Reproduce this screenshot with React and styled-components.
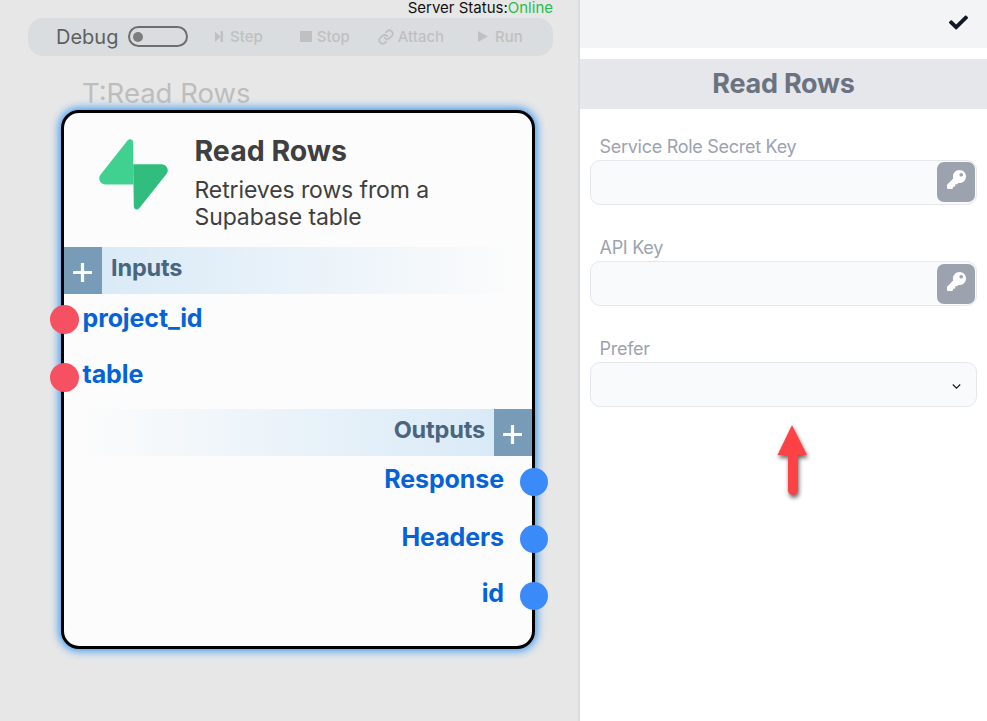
import React from "react";
import styled, { createGlobalStyle } from "styled-components";
import { FaCheck, FaKey } from "react-icons/fa";

const GlobalStyle = createGlobalStyle`
  *, *::before, *::after { box-sizing: border-box; }
  body { margin: 0; font-family: Inter, "Liberation Sans", sans-serif; }
`;

const Page = styled.div`
  display: grid;
  grid-template-columns: 580px 1fr;
  height: 721px;
  overflow: hidden;
  background: #fff;
`;

const Canvas = styled.main`
  background: #e7e7e7;
  border-right: 2px solid #d9dde0;
`;

const ServerStatus = styled.div`
  height: 18px;
  padding-right: 25px;
  text-align: right;
  font-size: 15px;
  line-height: 16px;
  color: #111;
`;

const Online = styled.span`
  color: #1fbf4a;
`;

const Toolbar = styled.div`
  display: flex;
  align-items: center;
  width: 525px;
  height: 38px;
  margin-left: 28px;
  padding: 0 0 1px 28px;
  border-radius: 15px;
  background: #d9dddf;
`;

const DebugLabel = styled.label`
  width: 72px;
  font-size: 20px;
  line-height: 36px;
  color: #5f5f5f;
`;

const Switch = styled.div`
  display: flex;
  align-items: center;
  width: 60px;
  height: 21px;
  padding-left: 3px;
  border: 2px solid #6e6e6e;
  border-radius: 11px;
`;

const Knob = styled.span`
  width: 10px;
  height: 10px;
  border-radius: 50%;
  background: #7d7d7d;
`;

const ToolButton = styled.button`
  display: flex;
  align-items: center;
  gap: ${(p) => p.$gap}px;
  margin: 0 0 0 ${(p) => p.$before}px;
  padding: 0;
  border: 0;
  background: none;
  font: 500 15px/20px Inter, sans-serif;
  color: #c0c0c0;
`;

const ToolIcon = styled.svg`
  display: block;
  flex: none;
`;

const NodeTag = styled.div`
  height: 54px;
  padding: 21px 0 0 82px;
  font-size: 27.5px;
  line-height: 33px;
  color: #bdbdbd;
`;

const NodeCard = styled.section`
  width: 474px;
  height: 539px;
  margin-left: 61px;
  border: 3px solid #000;
  border-radius: 18px;
  background: #fcfcfc;
  box-shadow: 0 0 8px 2px #3b99f0;
`;

const NodeHeader = styled.header`
  display: flex;
  height: 134px;
  padding: 26px 0 0 34.5px;
`;

const NodeText = styled.div`
  width: 270px;
  margin-left: 27px;
  color: #3f3f3f;
`;

const NodeTitle = styled.h2`
  margin: -6px 0 8px;
  font-size: 28.5px;
  line-height: 36px;
  font-weight: 700;
`;

const NodeDescription = styled.p`
  margin: 0;
  font-size: 23px;
  line-height: 27px;
  letter-spacing: -0.1px;
`;

const SectionBar = styled.div`
  display: flex;
  flex-direction: ${(p) => (p.$end ? "row-reverse" : "row")};
  height: 47px;
  background: linear-gradient(${(p) => (p.$end ? "270deg" : "90deg")}, #d9eaf7 8%, #fcfcfc 98%);
`;

const AddButton = styled.button`
  display: flex;
  justify-content: center;
  width: 38px;
  padding: 16px 1px 0 0;
  border: 0;
  background: #789cb7;
`;

const SectionTitle = styled.h3`
  margin: 0 9px;
  font-size: 23.5px;
  line-height: 42px;
  font-weight: 700;
  letter-spacing: -0.15px;
  color: #4a6580;
`;

const PortList = styled.div`
  height: ${(p) => p.$height}px;
`;

const Port = styled.div`
  display: flex;
  flex-direction: ${(p) => (p.$end ? "row-reverse" : "row")};
  align-items: center;
  gap: ${(p) => (p.$end ? 16 : 3.5)}px;
  height: ${(p) => p.$height}px;
  margin: 0 ${(p) => (p.$end ? -16 : 0)}px 0 ${(p) => (p.$end ? 0 : -14)}px;
`;

const Dot = styled.span`
  position: relative;
  flex: none;
  width: ${(p) => (p.$end ? 28 : 29)}px;
  height: ${(p) => (p.$end ? 28 : 29)}px;
  border-radius: 50%;
  background: ${(p) => (p.$end ? "#3b8af9" : "#f55163")};
`;

const PortName = styled.span`
  padding-bottom: ${(p) => p.$lift}px;
  font-size: 25px;
  line-height: 30px;
  font-weight: 700;
  letter-spacing: -0.1px;
  color: #0463d9;
`;

const Panel = styled.aside`
  background: #fff;
`;

const PanelBar = styled.div`
  display: flex;
  justify-content: flex-end;
  height: 48px;
  padding: 13px 19px 0 0;
  background: #f3f4f6;
  color: #111827;
`;

const PanelTitle = styled.h1`
  height: 50px;
  margin: 11px 0 25px;
  background: #e5e7eb;
  color: #6b7280;
  text-align: center;
  font-size: 27px;
  line-height: 49px;
  font-weight: 700;
  letter-spacing: -0.25px;
`;

const Field = styled.div`
  height: 101px;
  padding: 0 10px;
`;

const FieldLabel = styled.label`
  display: block;
  height: 26px;
  padding-left: 9.5px;
  font-size: 18px;
  line-height: 25px;
  letter-spacing: -0.28px;
  color: #9ca3af;
`;

const FieldBox = styled.div`
  display: flex;
  justify-content: flex-end;
  align-items: center;
  height: 45px;
  padding-right: ${(p) => (p.$select ? 15 : 1)}px;
  border: 1px solid #e5e7eb;
  border-radius: 10px;
  background: #f9fafc;
`;

const KeyButton = styled.button`
  display: flex;
  justify-content: center;
  width: 38px;
  height: 40px;
  margin-bottom: ${(p) => p.$lift}px;
  padding: 8px 0 0;
  border: 0;
  border-radius: 7px;
  background: #9ca3af;
  color: #fff;
`;

const Pointer = styled.svg`
  display: block;
  margin: -12px 0 0 190px;
  overflow: visible;
  filter: drop-shadow(1px 3px 2px rgba(0, 0, 0, 0.6));
`;

const Plus = () => (
  <svg width="19" height="19" viewBox="0 0 19 19">
    <path d="M9.5 0v19M0 9.5h19" stroke="#fff" strokeWidth="3.2" />
  </svg>
);

const inputs = [
  { name: "project_id", height: 51, lift: 3 },
  { name: "table", height: 64, lift: 6 },
];

const outputs = [
  { name: "Response", height: 52, lift: 6 },
  { name: "Headers", height: 62, lift: 4 },
  { name: "id", height: 52, lift: 6 },
];

export default function App() {
  return (
    <>
      <GlobalStyle />
      <Page>
        <Canvas>
          <ServerStatus>
            Server Status:<Online>Online</Online>
          </ServerStatus>
          <Toolbar>
            <DebugLabel>Debug</DebugLabel>
            <Switch>
              <Knob />
            </Switch>
            <ToolButton $before={27} $gap={7}>
              <ToolIcon width="8" height="12" viewBox="0 0 8 12">
                <path d="M0 0.5l5.6 5.2L0 11zM5.5 0H8v11H5.5z" fill="currentColor" />
              </ToolIcon>
              Step
            </ToolButton>
            <ToolButton $before={37} $gap={5}>
              <ToolIcon width="12" height="12" viewBox="0 0 12 12">
                <path d="M0 0h12v11H0z" fill="currentColor" />
              </ToolIcon>
              Stop
            </ToolButton>
            <ToolButton $before={28} $gap={4}>
              <ToolIcon width="16" height="16" viewBox="0 0 24 24" fill="none" stroke="currentColor" strokeWidth="2.7" strokeLinecap="round">
                <path d="M10 13a5 5 0 0 0 7.54.54l3-3a5 5 0 0 0-7.07-7.07l-1.72 1.71" />
                <path d="M14 11a5 5 0 0 0-7.54-.54l-3 3a5 5 0 0 0 7.07 7.07l1.71-1.71" />
              </ToolIcon>
              Attach
            </ToolButton>
            <ToolButton $before={34} $gap={7}>
              <ToolIcon width="10" height="12" viewBox="0 0 10 12">
                <path d="M0 0l10 5.5L0 11z" fill="currentColor" />
              </ToolIcon>
              Run
            </ToolButton>
          </Toolbar>
          <NodeTag>T:Read Rows</NodeTag>
          <NodeCard>
            <NodeHeader>
              <svg width="69" height="71" viewBox="0 0 109 113">
                <path d="M63.7 110.3C60.8 113.9 55 111.9 55 107.3L54 40.1h45.2c8.2 0 12.8 9.4 7.7 15.8L63.7 110.3z" fill="#30bd7e" />
                <path d="M45.3 2.1C48.2-1.5 54 .4 54 5l.5 67.3H9.8c-8.2 0-12.7-9.5-7.6-15.9L45.3 2.1z" fill="#40d190" />
              </svg>
              <NodeText>
                <NodeTitle>Read Rows</NodeTitle>
                <NodeDescription>Retrieves rows from a Supabase table</NodeDescription>
              </NodeText>
            </NodeHeader>
            <SectionBar>
              <AddButton aria-label="Add input">
                <Plus />
              </AddButton>
              <SectionTitle>Inputs</SectionTitle>
            </SectionBar>
            <PortList $height={115}>
              {inputs.map((p) => (
                <Port key={p.name} $height={p.height}>
                  <Dot />
                  <PortName $lift={p.lift}>{p.name}</PortName>
                </Port>
              ))}
            </PortList>
            <SectionBar $end>
              <AddButton aria-label="Add output">
                <Plus />
              </AddButton>
              <SectionTitle>Outputs</SectionTitle>
            </SectionBar>
            <PortList $height={180}>
              {outputs.map((p) => (
                <Port key={p.name} $end $height={p.height}>
                  <Dot $end />
                  <PortName $lift={p.lift}>{p.name}</PortName>
                </Port>
              ))}
            </PortList>
          </NodeCard>
        </Canvas>
        <Panel>
          <PanelBar>
            <FaCheck size={19} />
          </PanelBar>
          <PanelTitle>Read Rows</PanelTitle>
          <Field>
            <FieldLabel>Service Role Secret Key</FieldLabel>
            <FieldBox>
              <KeyButton $lift={2} aria-label="Choose secret">
                <FaKey size={19} />
              </KeyButton>
            </FieldBox>
          </Field>
          <Field>
            <FieldLabel>API Key</FieldLabel>
            <FieldBox>
              <KeyButton $lift={0} aria-label="Choose secret">
                <FaKey size={19} />
              </KeyButton>
            </FieldBox>
          </Field>
          <Field>
            <FieldLabel>Prefer</FieldLabel>
            <FieldBox $select>
              <svg width="9" height="6" viewBox="0 0 9 6" overflow="visible">
                <path d="M.8 2.500l3.700 3.700L8.200 2.500" fill="none" stroke="#222" strokeWidth="1.3" />
              </svg>
            </FieldBox>
          </Field>
          <Pointer width="44" height="72" viewBox="0 0 44 72">
            <path d="M22 0L37 30H28V65a5 5 0 0 1-10 0V30H7.500z" fill="#fe4144" />
          </Pointer>
        </Panel>
      </Page>
    </>
  );
}
